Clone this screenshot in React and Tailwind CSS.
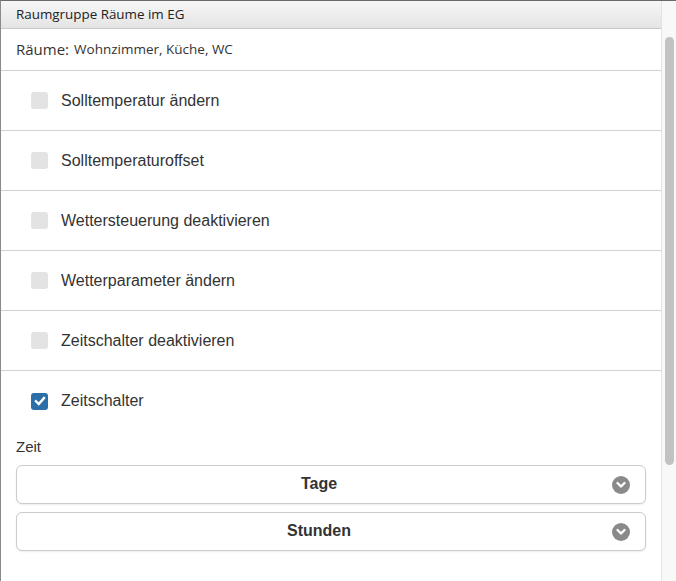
import React from "react";

const items = [
  { label: "Solltemperatur ändern", checked: false },
  { label: "Solltemperaturoffset", checked: false },
  { label: "Wettersteuerung deaktivieren", checked: false },
  { label: "Wetterparameter ändern", checked: false },
  { label: "Zeitschalter deaktivieren", checked: false },
  { label: "Zeitschalter", checked: true },
];

function Box({ checked }) {
  if (checked) {
    return (
      <div className="w-[17px] h-[17px] rounded-[3px] bg-[#2c6ea8] flex items-center justify-center shrink-0">
        <svg width="12" height="12" viewBox="0 0 12 12">
          <path d="M2 6.3 L4.8 9 L10 3" stroke="white" strokeWidth="2.4" fill="none" strokeLinecap="square" />
        </svg>
      </div>
    );
  }
  return <div className="w-[17px] h-[17px] rounded-[3px] bg-[#e3e3e3] shrink-0" />;
}

function Chevron() {
  return (
    <div className="w-[18px] h-[18px] rounded-full bg-[#8a8a8a] flex items-center justify-center">
      <svg width="10" height="8" viewBox="0 0 10 8">
        <path d="M1.5 2 L5 5.5 L8.5 2" stroke="white" strokeWidth="2.3" fill="none" strokeLinecap="round" strokeLinejoin="round" />
      </svg>
    </div>
  );
}

function Select({ label }) {
  return (
    <div className="relative h-[39px] rounded-[6px] border border-[#cccccc] bg-white flex items-center pl-4 pr-10 shadow-[0_1px_2px_rgba(0,0,0,0.08)]">
      <span className="flex-1 text-center text-[16px] font-bold text-[#333] font-['Liberation_Sans',Arial,sans-serif]">{label}</span>
      <div className="absolute right-[15px] top-[10px]">
        <Chevron />
      </div>
    </div>
  );
}

export default function App() {
  return (
    <div className="w-[676px] h-[581px] bg-white flex border-t border-t-[#6a6a6a] border-l border-l-[#8a8a8a] overflow-hidden">
      <div className="w-[660px] flex flex-col">
        <div className="h-[28px] shrink-0 flex items-center pl-[15px] bg-gradient-to-b from-[#f7f7f7] to-[#e4e4e4] border-b border-[#c8c8c8] text-[13.4px] text-[#222] font-['Open_Sans',sans-serif]">
          Raumgruppe Räume im EG
        </div>
        <div className="h-[42px] shrink-0 flex items-center pl-[15px] border-b border-[#d2d2d2] text-[#333] font-['Open_Sans',sans-serif]">
          <span className="text-[15px]">Räume:</span>
          <span className="text-[13.5px] ml-[5px]">Wohnzimmer, Küche, WC</span>
        </div>
        {items.map((it, i) => (
          <div
            key={it.label}
            className={
              "h-[60px] shrink-0 flex items-center pl-[30px] gap-[13px] " +
              (i < items.length - 1 ? "border-b border-[#d2d2d2]" : "")
            }
          >
            <Box checked={it.checked} />
            <span className="text-[16px] text-[#333] font-['Liberation_Sans',Arial,sans-serif]">{it.label}</span>
          </div>
        ))}
        <div className="px-[15px] pt-[5px] flex flex-col">
          <div className="text-[15px] text-[#333] font-['Liberation_Sans',Arial,sans-serif] mb-[6px]">Zeit</div>
          <div className="flex flex-col gap-[8px]">
            <Select label="Tage" />
            <Select label="Stunden" />
          </div>
        </div>
      </div>
      <div className="w-[15px] h-full bg-[#f8f8f8] border-l border-[#e4e4e4] flex justify-center pt-[36px]">
        <div className="w-[9px] h-[428px] rounded-full bg-[#c2c2c2]" />
      </div>
    </div>
  );
}
